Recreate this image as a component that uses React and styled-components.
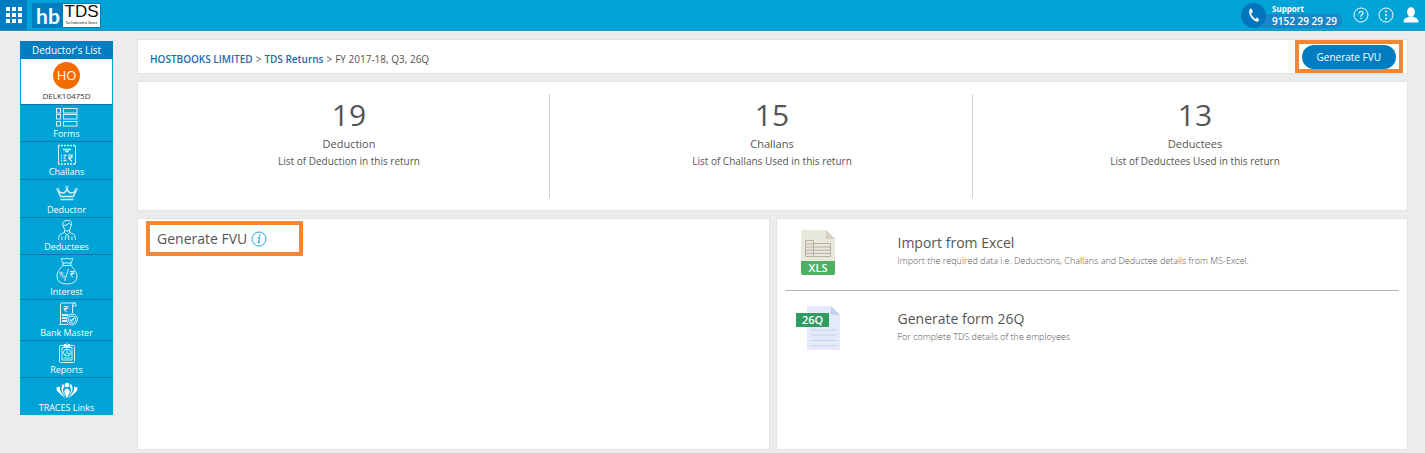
import React from "react";
import styled, { createGlobalStyle } from "styled-components";

const GlobalStyle = createGlobalStyle`
  * { box-sizing: border-box; }
  body {
    margin: 0;
    background: #ececec;
    color: #555;
    font-family: "Open Sans", "Noto Sans", sans-serif;
    font-size: 12px;
  }
  h2, h3, p { margin: 0; font-weight: 400; }
  button { font-family: inherit; cursor: pointer; }
  a { text-decoration: none; }
  svg { display: block; }
`;

const Header = styled.header`
  display: flex;
  align-items: center;
  height: 31px;
  background: #00a3d5;
  border-bottom: 1px solid #2b93b8;
`;
const Waffle = styled.button`
  display: grid;
  place-items: center;
  align-self: stretch;
  width: 27px;
  padding: 0;
  border: 0;
  background: #007dc1;
`;
const Logo = styled.a`
  display: flex;
  height: 25px;
  margin-left: 5px;
  background: #fff;
  border: 1px solid #007dc1;
`;
const LogoMark = styled.span`
  width: 30px;
  background: #007dc1;
  color: #fff;
  font: 700 21px/23px Lato, sans-serif;
  text-align: center;
`;
const LogoName = styled.span`
  display: flex;
  flex-direction: column;
  align-items: center;
  width: 37px;
  color: #111;
  font: 400 17px/16px "Liberation Sans", sans-serif;
`;
const LogoTag = styled.small`
  font-size: 3px;
  line-height: 6px;
  white-space: nowrap;
`;
const HeaderTools = styled.div`
  display: flex;
  align-items: center;
  margin-left: auto;
  padding-right: 2px;
`;
const Support = styled.a`
  display: flex;
  align-items: center;
  margin-right: 6px;
  color: #fff;
  font-weight: 700;
`;
const PhoneDisc = styled.span`
  position: relative;
  display: grid;
  place-items: center;
  width: 25px;
  height: 25px;
  border-radius: 50%;
  background: #0075bd;
`;
const SupportText = styled.span`
  display: flex;
  flex-direction: column;
  margin-left: -10px;
`;
const SupportLabel = styled.span`
  padding-left: 16px;
  font-size: 8px;
  line-height: 11px;
`;
const SupportNumber = styled.span`
  padding: 0 5px 0 16px;
  border-radius: 0 8px 8px 0;
  background: #1a86c7;
  font-size: 10px;
  font-weight: 600;
  line-height: 14px;
`;
const IconButton = styled.button`
  display: grid;
  place-items: center;
  width: 25px;
  height: 24px;
  padding: 0;
  border: 0;
  background: none;
  color: #fff;
`;

const Layout = styled.div`
  display: flex;
  align-items: flex-start;
  gap: 25px;
  padding: 9px 18px 3px 20px;
`;
const Sidebar = styled.nav`
  flex: 0 0 93px;
  margin-top: 1px;
  background: #00a3d5;
`;
const SidebarTitle = styled.div`
  background: #007dc1;
  color: #fff;
  font-size: 10px;
  line-height: 18px;
  text-align: center;
`;
const Deductor = styled.a`
  display: flex;
  flex-direction: column;
  align-items: center;
  height: 45px;
  padding-top: 3px;
  border: 1px solid #00a3d5;
  border-width: 0 1px;
  background: #fff;
  color: #333;
  font-size: 8px;
  line-height: 13px;
`;
const Avatar = styled.span`
  width: 27px;
  height: 27px;
  border-radius: 50%;
  background: #f26c00;
  color: #fff;
  font-size: 13px;
  line-height: 27px;
  text-align: center;
`;
const NavItem = styled.a`
  display: flex;
  flex-direction: column;
  align-items: center;
  padding: 2px 0 1px;
  border-top: 1px solid #0778a8;
  color: #fff;
  font-size: 9px;
  line-height: 13px;
`;

const Main = styled.main`
  display: flex;
  flex: 1;
  flex-direction: column;
  gap: 9px;
  min-width: 0;
`;
const Card = styled.section`
  background: #fff;
  box-shadow: 0 0 0 1px #e2e2e2;
`;
const TopCard = styled(Card)`
  display: flex;
  align-items: stretch;
  justify-content: space-between;
  min-height: 33px;
  padding: 0 4px 0 12px;
`;
const Crumbs = styled.nav`
  display: flex;
  align-items: center;
  gap: 3px;
  padding-top: 4px;
  font-size: 10px;
  a { color: #2268b0; font-weight: 600; }
`;
const Highlight = styled.div`
  display: flex;
  align-items: center;
  border: 4px solid #f58634;
`;
const PrimaryButton = styled.button`
  height: 24px;
  margin: 0 3px;
  padding: 0 15px;
  border: 0;
  border-radius: 12px;
  background: #007dc1;
  color: #fff;
  font-size: 10px;
`;
const Stats = styled(Card)`
  display: grid;
  grid-template-columns: repeat(3, 1fr);
  padding: 12px 0;
`;
const Stat = styled.div`
  display: flex;
  flex-direction: column;
  align-items: center;
  height: 104px;
  margin: 0 11px;
  padding-top: 1px;
  border-right: 1px solid ${(p) => (p.$last ? "transparent" : "#d0d0d0")};
`;
const StatValue = styled.strong`
  font-size: 30px;
  font-weight: 400;
  line-height: 40px;
`;
const StatName = styled.span`
  font-size: 11px;
  line-height: 18px;
`;
const StatNote = styled.span`
  font-size: 10px;
  line-height: 17px;
`;
const Panels = styled.div`
  display: grid;
  grid-template-columns: 1fr 1fr;
  gap: 8px;
  min-height: 230px;
`;
const FvuPanel = styled(Card)`
  padding: 2px 8px;
`;
const FvuHighlight = styled(Highlight)`
  gap: 4px;
  width: 157px;
  height: 35px;
  padding-left: 7px;
`;
const PanelTitle = styled.h2`
  font-size: 14px;
  line-height: 20px;
`;
const ActionPanel = styled(Card)`
  padding: 0 8px;
`;
const Action = styled.a`
  display: grid;
  grid-template-columns: 102px 1fr;
  height: 72px;
  padding: 11px 11px 0;
  color: inherit;
  & + & { margin-top: 4px; }
  &:not(:last-child) { border-bottom: 1px solid #b4b4b4; }
`;
const ActionTitle = styled.h3`
  padding-top: 3px;
  font-size: 14px;
  line-height: 20px;
`;
const ActionNote = styled.p`
  color: #555;
  font-size: 9px;
  font-weight: 300;
  line-height: 15px;
`;

const Line = ({ w, h, children }) => (
  <svg width={w} height={h} viewBox={`0 0 ${w} ${h}`} fill="none" stroke="#d9f2fa" strokeWidth="1" aria-hidden="true">
    {children}
  </svg>
);

const FormsIcon = () => (
  <Line w={22} h={20}>
    {[1, 7, 14].map((y) => (
      <g key={y}>
        <rect x="0.5" y={y + 0.5} width="4" height="4.5" />
        <rect x="7.5" y={y + 0.5} width="13.5" height="4.5" />
      </g>
    ))}
  </Line>
);
const ChallansIcon = () => (
  <Line w={20} h={21}>
    <path d="M1.500 1.500V20M18.500 1.500V20" />
    <path d="M1 1.500h18M1 20h18" strokeDasharray="2 1" strokeWidth="1.500" />
    <path d="M6 5.500h8M8 7.500h4" strokeWidth="1.400" />
    <path d="M4 11.500h1M4 14h1M4 16.500h1M6.500 11.500h3M6.500 14h2M6.500 16.500h3" strokeWidth="1.400" />
    <path d="M11 11h5M11 13h5M12 11q3 0 3 1.500T12 14.500l3 3" strokeWidth="1.200" />
  </Line>
);
const DeductorIcon = () => (
  <Line w={22} h={21}>
    <path d="M4.500 14.500 2 8.500q3 3 5 2.500 3-.5 4-4.500 1 4 4 4.500 2 .5 5-2.500l-2.500 6zM4.500 17.500h13" strokeWidth="1.400" strokeLinejoin="round" />
    <circle cx="11" cy="5.500" r="1.300" />
    <circle cx="1.800" cy="7.500" r="1.200" />
    <circle cx="20.200" cy="7.500" r="1.200" />
  </Line>
);
const DeducteesIcon = () => (
  <Line w={20} h={20}>
    <path d="M6 5.500C5 2 7 .5 10 .5q5 0 4.500 3l-.5 3q-.5 4-4 5-3-1-4-6q5 0 6-2.500l2 2M7.500 10v2.500L3.500 14Q1.500 15 1.500 20M12.500 10v2.500l4 1.500q2 1 2 6M7.500 12.500l2.500 2.500 2.500-2.500M9 15l-1 5M11 15l1 5M5 16.500V20M15 16.500V20" />
  </Line>
);
const InterestIcon = () => (
  <Line w={24} h={28}>
    <path d="M8 6Q5 1 7 1.500t3 .5q2-2 4 0 1 .5 3-.5T16 6zM8 8.500h8M8 6v2.500C4 12 2 15 2 19q0 8 10 8t10-8q0-4-6-10.500V6" />
    <path d="M13.500 12 9.500 24M5 19.500l4-4M15 14.500h4.500M15 16.500h4.500M15.500 14.500q3 0 3 1.500t-3 2l3 2.500" />
    <circle cx="5.800" cy="16" r="1" />
    <circle cx="8.500" cy="19.500" r="1" />
  </Line>
);
const BankIcon = () => (
  <Line w={22} h={24}>
    <path d="M4.500 22V3q0-2 2-2h13q-3 0-3 3v7M3 22.500h9M16.500 4H20V1.500" />
    <path d="M7.500 4.500h5M7.500 6.500h5M8 4.500q3 0 3 1.500t-3 2l3 2" />
    <path d="M6 13h6M6 16h4.500M6 19h5" strokeWidth="2" />
    <circle cx="16" cy="17.500" r="5.500" />
    <circle cx="16" cy="17.500" r="3.700" />
    <path d="m14 17.500 1.500 1.500 2.500-3" strokeWidth="1.300" />
  </Line>
);
const ReportsIcon = () => (
  <Line w={20} h={20}>
    <rect x="2.500" y="2.500" width="15" height="17" rx="1" />
    <path d="M5 4.500h10V17H5zM7 3.500V1.500h2q1-1.500 2 0h2v2z" />
    <circle cx="10" cy="9.500" r="3.500" />
    <path d="M10 6v3.500l3 2M10 9.500 7.500 12M6.500 15h7" />
  </Line>
);
const TracesIcon = () => (
  <svg width="24" height="21" viewBox="0 0 24 21" fill="#fff" aria-hidden="true">
    <circle cx="12" cy="5" r="2.300" />
    <path d="M12 18.500 9.300 12Q9 9.500 12 8.500q3 1 2.700 3.500z" />
    <path d="M11 18 7 11.500Q5.500 7 8 4q1.500.5 1.500 2.500-2.500 3-1 5.500zM13 18l4-6.500Q18.500 7 16 4q-1.500.5-1.500 2.500 2.500 3 1 5.500z" />
    <path d="M10.500 18.500 3 12Q1 10 1.500 7.500 4 6.500 5 7q-.5 3 1 5zM13.500 18.500 21 12q2-2 1.500-4.500-2.500-1-3.500-.5.500 3-1 5z" />
  </svg>
);

const XlsIcon = () => (
  <svg width="44" height="46" viewBox="0 0 44 46" aria-hidden="true">
    <path d="M5 0h25l9 9v36H5z" fill="#e9e8dd" />
    <path d="M30 0v9h9z" fill="#d2d1bf" />
    <path d="M9.500 10.500h8v16h-8zM17.500 13.500h17v13h-17M9.500 14h8M9.500 17h25M9.500 20.200h25M9.500 23.400h25" fill="none" stroke="#b9aea4" />
    <path d="M5 31h34v12q0 2-2 2H7q-2 0-2-2z" fill="#4fb063" />
    <text x="22" y="42" textAnchor="middle" fill="#fff" fontSize="11" fontWeight="600" fontFamily="Open Sans, sans-serif">XLS</text>
  </svg>
);
const FormIcon = () => (
  <svg width="46" height="46" viewBox="0 0 46 46" aria-hidden="true">
    <path d="M11 0h24l9 9v35H11z" fill="#e4eaf9" />
    <path d="M35 0v9h9z" fill="#c4d1ee" />
    <path d="M15 24h25M15 29h25M15 34.500h25M15 40h25" stroke="#c5d2ee" />
    <rect x="0" y="7" width="33" height="14" rx="1" fill="#2f9c62" />
    <text x="16.500" y="18" textAnchor="middle" fill="#fff" fontSize="11" fontWeight="600" fontFamily="Open Sans, sans-serif">26Q</text>
  </svg>
);

const NAV = [
  ["Forms", FormsIcon],
  ["Challans", ChallansIcon],
  ["Deductor", DeductorIcon],
  ["Deductees", DeducteesIcon],
  ["Interest", InterestIcon],
  ["Bank Master", BankIcon],
  ["Reports", ReportsIcon],
  ["TRACES Links", TracesIcon],
];
const STATS = [
  [19, "Deduction", "List of Deduction in this return"],
  [15, "Challans", "List of Challans Used in this return"],
  [13, "Deductees", "List of Deductees Used in this return"],
];

export default function App() {
  return (
    <>
      <GlobalStyle />
      <Header>
        <Waffle aria-label="Apps">
          <svg width="16" height="16" fill="#fff" aria-hidden="true">
            {[0, 6, 12].map((y) => [0, 6, 12].map((x) => <rect key={`${x}-${y}`} x={x} y={y} width="4" height="4" />))}
          </svg>
        </Waffle>
        <Logo href="#">
          <LogoMark>hb</LogoMark>
          <LogoName>
            TDS
            <LogoTag>Tax Deducted at Source</LogoTag>
          </LogoName>
        </Logo>
        <HeaderTools>
          <Support href="#">
            <PhoneDisc>
              <svg width="12" height="14" viewBox="0 0 12 14" aria-hidden="true">
                <path d="M2.500 1.500Q1 5 4 9t6 3.500" fill="none" stroke="#fff" strokeWidth="1.700" />
                <path d="m2 1 1.800.3.7 3-1.500.8zM8 9.800l2.600 1-.2 2.200-2 .2z" fill="#fff" stroke="#fff" strokeWidth=".5" />
              </svg>
            </PhoneDisc>
            <SupportText>
              <SupportLabel>Support</SupportLabel>
              <SupportNumber>9152 29 29 29</SupportNumber>
            </SupportText>
          </Support>
          <IconButton aria-label="Help">
            <svg width="16" height="16" fill="none" stroke="#fff" aria-hidden="true">
              <circle cx="8" cy="8" r="7" />
              <path d="M6 6.500q0-2 2-2t2 1.800Q10 7.500 8 8.500v1.200M8 10.800V12" strokeWidth="1.200" />
            </svg>
          </IconButton>
          <IconButton aria-label="More">
            <svg width="16" height="16" fill="#fff" aria-hidden="true">
              <circle cx="8" cy="8" r="7" fill="none" stroke="#fff" />
              <circle cx="8" cy="4.500" r="1" />
              <circle cx="8" cy="8" r="1" />
              <circle cx="8" cy="11.500" r="1" />
            </svg>
          </IconButton>
          <IconButton aria-label="Account">
            <svg width="16" height="16" fill="#fff" aria-hidden="true">
              <ellipse cx="8" cy="5" rx="4" ry="4.700" />
              <path d="M.5 15.500q0-4 2.500-4.500l3-1.500h4l3 1.500q2.500.5 2.500 4.500z" />
            </svg>
          </IconButton>
        </HeaderTools>
      </Header>

      <Layout>
        <Sidebar>
          <SidebarTitle>Deductor's List</SidebarTitle>
          <Deductor href="#">
            <Avatar>HO</Avatar>
            DELK10475D
          </Deductor>
          {NAV.map(([label, Icon]) => (
            <NavItem key={label} href="#">
              <Icon />
              {label}
            </NavItem>
          ))}
        </Sidebar>

        <Main>
          <TopCard>
            <Crumbs>
              <a href="#">HOSTBOOKS LIMITED</a>
              <span>&gt;</span>
              <a href="#">TDS Returns</a>
              <span>&gt;</span>
              <span>FY 2017-18, Q3, 26Q</span>
            </Crumbs>
            <Highlight>
              <PrimaryButton>Generate FVU</PrimaryButton>
            </Highlight>
          </TopCard>

          <Stats>
            {STATS.map(([value, name, note], i) => (
              <Stat key={name} $last={i === STATS.length - 1}>
                <StatValue>{value}</StatValue>
                <StatName>{name}</StatName>
                <StatNote>{note}</StatNote>
              </Stat>
            ))}
          </Stats>

          <Panels>
            <FvuPanel>
              <FvuHighlight>
                <PanelTitle>Generate FVU</PanelTitle>
                <svg width="16" height="16" fill="none" stroke="#20addb" aria-hidden="true">
                  <circle cx="8" cy="8" r="7" />
                  <path d="M7 6.500h1.500L7.500 11.500H9" strokeWidth="1.200" />
                  <circle cx="8.800" cy="4.300" r=".5" />
                </svg>
              </FvuHighlight>
            </FvuPanel>
            <ActionPanel>
              <Action href="#">
                <XlsIcon />
                <div>
                  <ActionTitle>Import from Excel</ActionTitle>
                  <ActionNote>Import the required data i.e. Deductions, Challans and Deductee details from MS-Excel.</ActionNote>
                </div>
              </Action>
              <Action href="#">
                <FormIcon />
                <div>
                  <ActionTitle>Generate form 26Q</ActionTitle>
                  <ActionNote>For complete TDS details of the employees</ActionNote>
                </div>
              </Action>
            </ActionPanel>
          </Panels>
        </Main>
      </Layout>
    </>
  );
}
